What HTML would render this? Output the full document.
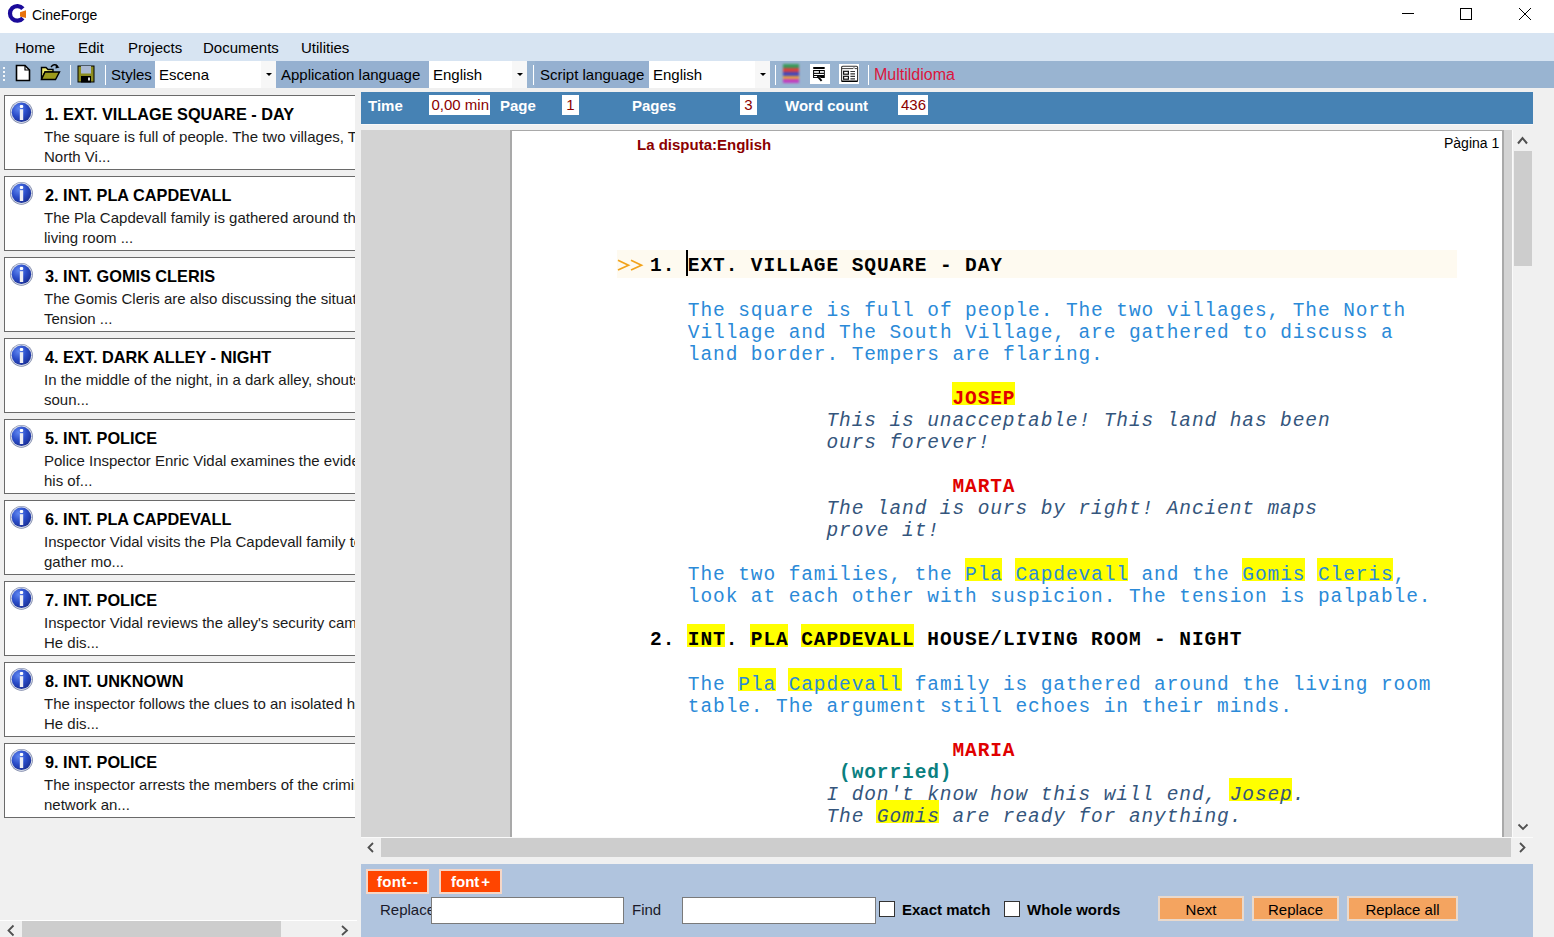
<!DOCTYPE html>
<html><head><meta charset="utf-8">
<style>
*{margin:0;padding:0;box-sizing:border-box}
html,body{width:1554px;height:937px;overflow:hidden;background:#f0f0f0;font-family:"Liberation Sans",sans-serif;color:#000}
.a{position:absolute}
#title{left:0;top:0;width:1554px;height:33px;background:#fff}
#menu{left:0;top:33px;width:1554px;height:28px;background:#d7e4f2}
#tool{left:0;top:61px;width:1554px;height:27px;background:#99b4d1}
.mi{position:absolute;top:39px;font-size:15px;color:#000}
.lbl{position:absolute;top:61px;height:27px;font-size:15px;line-height:27px;padding-left:5px;background:#95b0d0}
.combo{position:absolute;top:61px;height:27px;background:#fff;font-size:15px;line-height:27px;padding-left:4px}
.combo .arr{position:absolute;right:0;top:0;width:15px;height:27px;background:#f7f7f7}
.combo .arr:after{content:"";position:absolute;left:5px;top:12px;border-left:3px solid transparent;border-right:3px solid transparent;border-top:3px solid #000}
.sep{position:absolute;top:65px;width:1px;height:20px;background:#fff}
/* left cards */
.card{position:absolute;left:4px;width:360px;height:75px;background:#fff;border:1px solid #6a6a6a}
.card .ic{position:absolute;left:4px;top:4px;width:25px;height:25px}
.card .t{position:absolute;left:40px;top:7.5px;font-size:16.3px;line-height:20px;font-weight:bold;white-space:nowrap}
.card .d{position:absolute;left:39px;top:31px;font-size:15px;line-height:20px;white-space:nowrap;color:#1a1a1a}
#leftclip{left:0;top:88px;width:355px;height:832px;overflow:hidden}
/* doc header */
#dochdr{left:361px;top:92px;width:1172px;height:32px;background:#4682b4}
.hl{position:absolute;top:97px;font-size:15px;font-weight:bold;color:#fff}
.hb{position:absolute;top:95px;height:20px;background:#fff;color:#8b0000;font-size:15px;line-height:20px;text-align:right;padding-right:1px}
#docarea{left:361px;top:130px;width:1151px;height:707px;background:#d3d3d3;overflow:hidden}
#page{left:510px;top:130px;width:994px;height:707px;background:#fff;border-left:2px solid #a9a9a9;border-top:1px solid #a9a9a9;border-right:2px solid #a9a9a9}
.mono{font-family:"Liberation Mono",monospace;font-size:19.5px;letter-spacing:0.9px;white-space:pre}
.ln{position:absolute;line-height:22px}
.desc{color:#2b8ad8}
.dlg{color:#34557c;font-style:italic}
.chr{color:#e00000;font-weight:bold}
.par{color:#0a8080;font-weight:bold}
.hd{color:#000;font-weight:bold}
.hlb{position:absolute;height:23px;background:#ffff00}
#bottom{left:361px;top:864px;width:1172px;height:73px;background:#b0c4de}
.fbtn{position:absolute;top:869px;height:25px;background:#ff4500;border:2px solid #f5d6c6;color:#fff;font-weight:bold;font-size:15px;line-height:21px;padding-left:7px}
.obtn{position:absolute;top:896px;height:25px;background:#f4a460;border:2px solid #e9d9cc;color:#000;font-size:15px;line-height:23px;text-align:center}
.inp{position:absolute;top:897px;height:27px;background:#fff;border:1px solid #7a7a7a}
.chk{position:absolute;top:901px;width:16px;height:16px;background:#fff;border:1px solid #333}
</style></head><body>
<div id="title" class="a"></div>
<svg class="a" style="left:0;top:0" width="30" height="30" viewBox="0 0 30 30"><path d="M22.89 8.71 A7.3 7.3 0 1 0 22.89 18.09" fill="none" stroke="#1a0a9a" stroke-width="4.2"/><path d="M20 12.3 L26 10.3 L26 17.9 L20 16.5 Z" fill="#e8720c"/></svg>
<div class="a" style="left:32px;top:7px;font-size:14px;color:#000">CineForge</div>
<svg class="a" style="left:1400px;top:8px" width="140" height="16" viewBox="0 0 140 16"><line x1="2" y1="5.5" x2="14" y2="5.5" stroke="#000" stroke-width="1"/><rect x="60.5" y="0.5" width="11" height="11" fill="none" stroke="#000"/><path d="M119 0 L131 12 M131 0 L119 12" stroke="#000" stroke-width="1"/></svg>

<div id="menu" class="a"></div>
<div class="mi" style="left:15px">Home</div>
<div class="mi" style="left:78px">Edit</div>
<div class="mi" style="left:128px">Projects</div>
<div class="mi" style="left:203px">Documents</div>
<div class="mi" style="left:301px">Utilities</div>

<div id="tool" class="a"></div>
<div class="lbl" style="left:106px;width:49px">Styles</div>
<div class="combo" style="left:155px;width:121px">Escena<div class="arr"></div></div>
<div class="lbl" style="left:276px;width:153px">Application language</div>
<div class="combo" style="left:429px;width:98px">English<div class="arr"></div></div>
<div class="sep" style="left:533px"></div>
<div class="lbl" style="left:535px;width:114px">Script language</div>
<div class="combo" style="left:649px;width:121px">English<div class="arr"></div></div>
<div class="sep" style="left:775px"></div>
<div class="a" style="left:3px;top:67px;width:2px;height:14px;background:repeating-linear-gradient(#fff 0 2px,transparent 2px 4px);opacity:.9"></div>
<svg class="a" style="left:15px;top:64px" width="16" height="18" viewBox="0 0 16 18"><path d="M1.5 1.5 H10 L14.5 6 V16.5 H1.5 Z" fill="#fff" stroke="#000" stroke-width="1.6"/><path d="M10 1.5 V6 H14.5" fill="none" stroke="#000" stroke-width="1.2"/></svg>
<svg class="a" style="left:40px;top:63px" width="22" height="18" viewBox="0 0 22 18"><path d="M1.5 4.5 H6 L8 6.5 H13 V9 H5 L1.5 16.5 Z" fill="#f0ec70" stroke="#000" stroke-width="1.4"/><path d="M1.5 16.5 L5 9 H19.5 L15.5 16.5 Z" fill="#9c9a1c" stroke="#000" stroke-width="1.4"/><path d="M11 4 Q14 0 17.5 3" fill="none" stroke="#000" stroke-width="1.4"/><path d="M16 1.5 L19.5 4.5 L15.5 5.5 Z" fill="#000"/></svg>
<div class="sep" style="left:70px"></div>
<svg class="a" style="left:77px;top:65px" width="18" height="18" viewBox="0 0 18 18"><rect x="0.5" y="0.5" width="17" height="17" fill="#000"/><rect x="1.5" y="1.5" width="15" height="15" fill="#8c8c1e"/><rect x="4" y="1" width="10" height="7.5" fill="#a9b8d2"/><rect x="4" y="11" width="10" height="6.5" fill="#000"/><rect x="11" y="12.5" width="2" height="3" fill="#ddd"/></svg>
<div class="sep" style="left:105px"></div>
<div class="a" style="left:783px;top:64px;width:16px;height:19px;background:linear-gradient(#3a9a5a 0 22%,#d84040 22% 42%,#4848b8 42% 62%,#e8a040 62% 77%,#c040c0 77% 100%);filter:blur(0.9px)"></div>
<div class="a" style="left:810px;top:64px;width:20px;height:20px;background:#fff"></div>
<svg class="a" style="left:810px;top:64px" width="20" height="20" viewBox="0 0 20 20"><rect x="3.1" y="3" width="11.7" height="1.9" rx="0.6" fill="#000"/><path d="M3.1 6 H14.8 V13.9 H11 L9 12.5 L7.9 13.9 H3.1 Z" fill="#000"/><rect x="4.1" y="7.1" width="4.8" height="1.7" fill="#fff"/><rect x="10" y="7.1" width="3.9" height="1.7" fill="#fff"/><rect x="4.1" y="9.9" width="9.8" height="1.1" fill="#fff"/><rect x="4.1" y="12" width="3" height="1.1" fill="#fff"/><path d="M8.3 13.2 L11.6 16.8" stroke="#000" stroke-width="1.9"/></svg>
<div class="a" style="left:839px;top:64px;width:20px;height:20px;background:#fff"></div>
<svg class="a" style="left:839px;top:64px" width="20" height="20" viewBox="0 0 20 20"><rect x="2.6" y="2.3" width="16" height="15.1" rx="1.2" fill="none" stroke="#333" stroke-width="1.1"/><path d="M2.6 17.3 H18.6" stroke="#000" stroke-width="1.3"/><path d="M3 4.6 H14 L15 3.6 L16 4.6 H18.3" fill="none" stroke="#444" stroke-width="1"/><rect x="4.6" y="7.3" width="4.8" height="2.9" fill="#fff" stroke="#111" stroke-width="1.2"/><rect x="4.6" y="12.3" width="4.8" height="2.9" fill="#fff" stroke="#111" stroke-width="1.2"/><path d="M11.4 7.5 H16 M11.4 9.9 H16 M11.4 12.3 H16 M11.4 14.9 H16" stroke="#333" stroke-width="1.2"/></svg>

<div class="sep" style="left:868px"></div>
<div class="a" style="left:874px;top:66px;font-size:16px;color:#dc143c">Multildioma</div>

<div id="leftclip" class="a">
<svg width="0" height="0" style="position:absolute"><defs><radialGradient id="igr" cx="35%" cy="30%" r="75%"><stop offset="0" stop-color="#5f86f0"/><stop offset="0.55" stop-color="#2a4cc8"/><stop offset="1" stop-color="#1a2f95"/></radialGradient></defs></svg>
<div class="card" style="top:7px"><svg class="ic" viewBox="0 0 25 25"><circle cx="12.45" cy="12.3" r="11.4" fill="#7c86a8"/><circle cx="12.45" cy="12.3" r="10.7" fill="#d4dae8"/><circle cx="12.45" cy="12.3" r="9.7" fill="url(#igr)"/><rect x="10.8" y="4.9" width="3.4" height="3.2" rx="1.1" fill="#fff"/><rect x="10.8" y="9.2" width="3.4" height="10.8" fill="#eeeef4"/></svg><div class="t">1. EXT. VILLAGE SQUARE - DAY</div><div class="d">The square is full of people. The two villages, The<br>North Vi...</div></div>
<div class="card" style="top:88px"><svg class="ic" viewBox="0 0 25 25"><circle cx="12.45" cy="12.3" r="11.4" fill="#7c86a8"/><circle cx="12.45" cy="12.3" r="10.7" fill="#d4dae8"/><circle cx="12.45" cy="12.3" r="9.7" fill="url(#igr)"/><rect x="10.8" y="4.9" width="3.4" height="3.2" rx="1.1" fill="#fff"/><rect x="10.8" y="9.2" width="3.4" height="10.8" fill="#eeeef4"/></svg><div class="t">2. INT. PLA CAPDEVALL</div><div class="d">The Pla Capdevall family is gathered around the<br>living room ...</div></div>
<div class="card" style="top:169px"><svg class="ic" viewBox="0 0 25 25"><circle cx="12.45" cy="12.3" r="11.4" fill="#7c86a8"/><circle cx="12.45" cy="12.3" r="10.7" fill="#d4dae8"/><circle cx="12.45" cy="12.3" r="9.7" fill="url(#igr)"/><rect x="10.8" y="4.9" width="3.4" height="3.2" rx="1.1" fill="#fff"/><rect x="10.8" y="9.2" width="3.4" height="10.8" fill="#eeeef4"/></svg><div class="t">3. INT. GOMIS CLERIS</div><div class="d">The Gomis Cleris are also discussing the situation.<br>Tension ...</div></div>
<div class="card" style="top:250px"><svg class="ic" viewBox="0 0 25 25"><circle cx="12.45" cy="12.3" r="11.4" fill="#7c86a8"/><circle cx="12.45" cy="12.3" r="10.7" fill="#d4dae8"/><circle cx="12.45" cy="12.3" r="9.7" fill="url(#igr)"/><rect x="10.8" y="4.9" width="3.4" height="3.2" rx="1.1" fill="#fff"/><rect x="10.8" y="9.2" width="3.4" height="10.8" fill="#eeeef4"/></svg><div class="t">4. EXT. DARK ALLEY - NIGHT</div><div class="d">In the middle of the night, in a dark alley, shouts<br>soun...</div></div>
<div class="card" style="top:331px"><svg class="ic" viewBox="0 0 25 25"><circle cx="12.45" cy="12.3" r="11.4" fill="#7c86a8"/><circle cx="12.45" cy="12.3" r="10.7" fill="#d4dae8"/><circle cx="12.45" cy="12.3" r="9.7" fill="url(#igr)"/><rect x="10.8" y="4.9" width="3.4" height="3.2" rx="1.1" fill="#fff"/><rect x="10.8" y="9.2" width="3.4" height="10.8" fill="#eeeef4"/></svg><div class="t">5. INT. POLICE</div><div class="d">Police Inspector Enric Vidal examines the evidence<br>his of...</div></div>
<div class="card" style="top:412px"><svg class="ic" viewBox="0 0 25 25"><circle cx="12.45" cy="12.3" r="11.4" fill="#7c86a8"/><circle cx="12.45" cy="12.3" r="10.7" fill="#d4dae8"/><circle cx="12.45" cy="12.3" r="9.7" fill="url(#igr)"/><rect x="10.8" y="4.9" width="3.4" height="3.2" rx="1.1" fill="#fff"/><rect x="10.8" y="9.2" width="3.4" height="10.8" fill="#eeeef4"/></svg><div class="t">6. INT. PLA CAPDEVALL</div><div class="d">Inspector Vidal visits the Pla Capdevall family to<br>gather mo...</div></div>
<div class="card" style="top:493px"><svg class="ic" viewBox="0 0 25 25"><circle cx="12.45" cy="12.3" r="11.4" fill="#7c86a8"/><circle cx="12.45" cy="12.3" r="10.7" fill="#d4dae8"/><circle cx="12.45" cy="12.3" r="9.7" fill="url(#igr)"/><rect x="10.8" y="4.9" width="3.4" height="3.2" rx="1.1" fill="#fff"/><rect x="10.8" y="9.2" width="3.4" height="10.8" fill="#eeeef4"/></svg><div class="t">7. INT. POLICE</div><div class="d">Inspector Vidal reviews the alley's security camera<br>He dis...</div></div>
<div class="card" style="top:574px"><svg class="ic" viewBox="0 0 25 25"><circle cx="12.45" cy="12.3" r="11.4" fill="#7c86a8"/><circle cx="12.45" cy="12.3" r="10.7" fill="#d4dae8"/><circle cx="12.45" cy="12.3" r="9.7" fill="url(#igr)"/><rect x="10.8" y="4.9" width="3.4" height="3.2" rx="1.1" fill="#fff"/><rect x="10.8" y="9.2" width="3.4" height="10.8" fill="#eeeef4"/></svg><div class="t">8. INT. UNKNOWN</div><div class="d">The inspector follows the clues to an isolated house<br>He dis...</div></div>
<div class="card" style="top:655px"><svg class="ic" viewBox="0 0 25 25"><circle cx="12.45" cy="12.3" r="11.4" fill="#7c86a8"/><circle cx="12.45" cy="12.3" r="10.7" fill="#d4dae8"/><circle cx="12.45" cy="12.3" r="9.7" fill="url(#igr)"/><rect x="10.8" y="4.9" width="3.4" height="3.2" rx="1.1" fill="#fff"/><rect x="10.8" y="9.2" width="3.4" height="10.8" fill="#eeeef4"/></svg><div class="t">9. INT. POLICE</div><div class="d">The inspector arrests the members of the criminal<br>network an...</div></div>
</div>

<div id="dochdr" class="a"></div>
<div class="hl" style="left:368px">Time</div>
<div class="hb" style="left:429px;width:61px">0,00 min</div>
<div class="hl" style="left:500px">Page</div>
<div class="hb" style="left:562px;width:17px;text-align:center;padding:0">1</div>
<div class="hl" style="left:632px">Pages</div>
<div class="hb" style="left:740px;width:17px;text-align:center;padding:0">3</div>
<div class="hl" style="left:785px">Word count</div>
<div class="hb" style="left:898px;width:30px;padding-right:2px">436</div>

<div id="docarea" class="a"></div>
<div class="a" style="left:361px;top:124px;width:1172px;height:1px;background:#f8f8f8"></div>
<div class="a" style="left:1512px;top:130px;width:1px;height:708px;background:#fafafa"></div>
<div class="a" style="left:1513px;top:131px;width:20px;height:706px;background:#f0f0f0"></div>
<div class="a" style="left:1514px;top:151px;width:18px;height:115px;background:#cdcdcd"></div>
<svg class="a" style="left:1513px;top:130px" width="20" height="20" viewBox="0 0 20 20"><path d="M5 13.5 L9.5 8 L14 13.5" fill="none" stroke="#505050" stroke-width="2"/></svg>
<svg class="a" style="left:1513px;top:817px" width="20" height="20" viewBox="0 0 20 20"><path d="M5.5 7.5 L10 12 L14.5 7.5" fill="none" stroke="#505050" stroke-width="1.8"/></svg>
<div class="a" style="left:361px;top:837px;width:1172px;height:1px;background:#fafafa"></div>
<div class="a" style="left:361px;top:838px;width:1172px;height:19px;background:#f0f0f0"></div>
<div class="a" style="left:381px;top:838px;width:1130px;height:19px;background:#cdcdcd"></div>
<svg class="a" style="left:361px;top:838px" width="20" height="19" viewBox="0 0 20 19"><path d="M12 5 L7.5 9.5 L12 14" fill="none" stroke="#505050" stroke-width="1.8"/></svg>
<svg class="a" style="left:1512px;top:838px" width="20" height="19" viewBox="0 0 20 19"><path d="M8 5 L12.5 9.5 L8 14" fill="none" stroke="#505050" stroke-width="1.8"/></svg>
<div class="a" style="left:0;top:920px;width:357px;height:1px;background:#fff"></div>
<div class="a" style="left:0;top:921px;width:357px;height:16px;background:#f0f0f0"></div>
<div class="a" style="left:22px;top:921px;width:259px;height:16px;background:#cdcdcd"></div>
<svg class="a" style="left:0;top:921px" width="20" height="16" viewBox="0 0 20 16"><path d="M13.5 4.5 L8.5 9.5 L13.5 14.5" fill="none" stroke="#505050" stroke-width="1.8"/></svg>
<svg class="a" style="left:335px;top:921px" width="20" height="16" viewBox="0 0 20 16"><path d="M7 5 L12 9.5 L7 14" fill="none" stroke="#505050" stroke-width="1.8"/></svg>

<div id="page" class="a"></div>
<div class="a" style="left:617px;top:250px;width:840px;height:28px;background:#fefaf0"></div>
<div class="hlb" style="left:952.0px;top:382px;width:63.0px"></div>
<div class="hlb" style="left:964.6px;top:558px;width:37.8px"></div>
<div class="hlb" style="left:1015.0px;top:558px;width:113.4px"></div>
<div class="hlb" style="left:1241.8px;top:558px;width:63.0px"></div>
<div class="hlb" style="left:1317.4px;top:558px;width:75.6px"></div>
<div class="hlb" style="left:687.4px;top:624px;width:37.8px"></div>
<div class="hlb" style="left:750.4px;top:624px;width:37.8px"></div>
<div class="hlb" style="left:800.8px;top:624px;width:113.4px"></div>
<div class="hlb" style="left:737.8px;top:668px;width:37.8px"></div>
<div class="hlb" style="left:788.2px;top:668px;width:113.4px"></div>
<div class="hlb" style="left:1229.2px;top:778px;width:63.0px"></div>
<div class="hlb" style="left:876.4px;top:800px;width:63.0px"></div>
<div class="ln mono hd" style="left:650.05px;top:255px">1. EXT. VILLAGE SQUARE - DAY</div>
<div class="ln mono desc" style="left:687.85px;top:300px">The square is full of people. The two villages, The North</div>
<div class="ln mono desc" style="left:687.85px;top:322px">Village and The South Village, are gathered to discuss a</div>
<div class="ln mono desc" style="left:687.85px;top:344px">land border. Tempers are flaring.</div>
<div class="ln mono chr" style="left:952.45px;top:388px">JOSEP</div>
<div class="ln mono dlg" style="left:826.45px;top:410px">This is unacceptable! This land has been</div>
<div class="ln mono dlg" style="left:826.45px;top:432px">ours forever!</div>
<div class="ln mono chr" style="left:952.45px;top:476px">MARTA</div>
<div class="ln mono dlg" style="left:826.45px;top:498px">The land is ours by right! Ancient maps</div>
<div class="ln mono dlg" style="left:826.45px;top:520px">prove it!</div>
<div class="ln mono desc" style="left:687.85px;top:564px">The two families, the Pla Capdevall and the Gomis Cleris,</div>
<div class="ln mono desc" style="left:687.85px;top:586px">look at each other with suspicion. The tension is palpable.</div>
<div class="ln mono hd" style="left:650.05px;top:629px">2. INT. PLA CAPDEVALL HOUSE/LIVING ROOM - NIGHT</div>
<div class="ln mono desc" style="left:687.85px;top:674px">The Pla Capdevall family is gathered around the living room</div>
<div class="ln mono desc" style="left:687.85px;top:696px">table. The argument still echoes in their minds.</div>
<div class="ln mono chr" style="left:952.45px;top:740px">MARIA</div>
<div class="ln mono par" style="left:839.05px;top:762px">(worried)</div>
<div class="ln mono dlg" style="left:826.45px;top:784px">I don't know how this will end, Josep.</div>
<div class="ln mono dlg" style="left:826.45px;top:806px">The Gomis are ready for anything.</div>
<svg class="a" style="left:616px;top:258px" width="28" height="14" viewBox="0 0 28 14"><path d="M2 2.3 L12.5 7.2 L2 12.1 M15 2.3 L25.5 7.2 L15 12.1" fill="none" stroke="#f2a31b" stroke-width="1.7"/></svg>
<div class="a" style="left:686px;top:250px;width:2px;height:26px;background:#000"></div>
<div class="a" style="left:637px;top:136px;font-size:15px;font-weight:bold;color:#8b0000">La disputa:English</div>
<div class="a" style="left:1444px;top:135px;font-size:14px;color:#000">Pàgina 1</div>

<div id="bottom" class="a"></div>
<div class="fbtn" style="left:366px;width:63px;padding-left:9px;letter-spacing:0.3px">font<span style="letter-spacing:1.5px">--</span></div>
<div class="fbtn" style="left:439px;width:63px;padding-left:10px">font<span style="padding-left:2px">+</span></div>
<div class="a" style="left:380px;top:901px;font-size:15px;color:#1a1a2a">Replace</div>
<div class="inp" style="left:431px;width:193px"></div>
<div class="a" style="left:632px;top:901px;font-size:15px;color:#1a1a2a">Find</div>
<div class="inp" style="left:682px;width:194px"></div>
<div class="chk" style="left:879px"></div>
<div class="a" style="left:902px;top:901px;font-size:15px;font-weight:bold">Exact match</div>
<div class="chk" style="left:1004px"></div>
<div class="a" style="left:1027px;top:901px;font-size:15px;font-weight:bold">Whole words</div>
<div class="obtn" style="left:1158px;width:86px">Next</div>
<div class="obtn" style="left:1252px;width:87px">Replace</div>
<div class="obtn" style="left:1347px;width:111px">Replace all</div>
</body></html>
